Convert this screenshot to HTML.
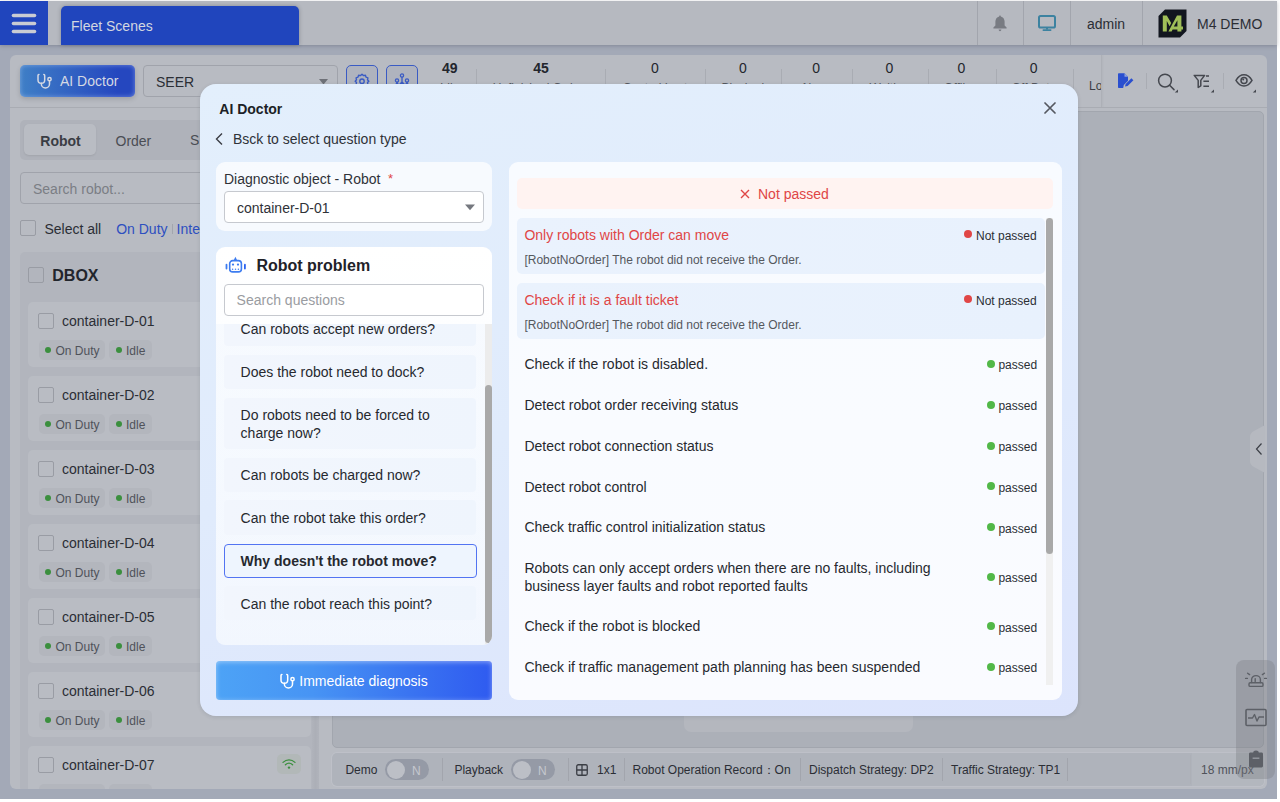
<!DOCTYPE html>
<html><head><meta charset="utf-8"><style>
*{box-sizing:border-box;margin:0;padding:0}
html,body{width:1280px;height:802px;overflow:hidden;background:#fff;font-family:"Liberation Sans",sans-serif;color:#2b2e35}
.abs{position:absolute}
.t{position:absolute;white-space:nowrap;line-height:1}
</style></head><body>
<div class="abs" style="left:0px;top:1px;width:1277px;height:798px;background:#a3a9b7"></div>
<div class="abs" style="left:0px;top:1px;width:1277px;height:44px;background:#b6b9c0;box-shadow:0 1px 4px rgba(40,45,60,.25)"></div>
<div class="abs" style="left:0px;top:1px;width:48px;height:44px;background:#2045bd"></div>
<svg class="abs" style="left:11px;top:12px" width="26" height="22" viewBox="0 0 26 22"><g stroke="#c9ccd3" stroke-width="3.6" stroke-linecap="round"><line x1="2.5" y1="3.5" x2="23.5" y2="3.5"/><line x1="2.5" y1="11.5" x2="23.5" y2="11.5"/><line x1="2.5" y1="19.5" x2="23.5" y2="19.5"/></g></svg>
<div class="abs" style="left:61px;top:6px;width:237.5px;height:39px;background:#2045bd;border-radius:5px 5px 0 0;box-shadow:0 0 4px rgba(30,35,50,.3)"></div>
<div class="t" style="left:71.0px;top:18.7px;font-size:14px;color:#d3d7e0;font-weight:400;">Fleet Scenes</div>
<div class="abs" style="left:977px;top:1px;width:1px;height:44px;background:#a2a5ad"></div>
<div class="abs" style="left:1023px;top:1px;width:1px;height:44px;background:#a2a5ad"></div>
<div class="abs" style="left:1070px;top:1px;width:1px;height:44px;background:#a2a5ad"></div>
<div class="abs" style="left:1142px;top:1px;width:1px;height:44px;background:#a2a5ad"></div>
<svg class="abs" style="left:993px;top:15px" width="14" height="17" viewBox="0 0 14 17"><path d="M7 0.5 C7.6 0.5 7.8 1 7.8 1.4 C10.2 2 11.6 4 11.6 6.6 V10.4 L13.6 12.6 V13.5 H0.4 V12.6 L2.4 10.4 V6.6 C2.4 4 3.8 2 6.2 1.4 C6.2 1 6.4 0.5 7 0.5Z M5.6 14.6 H8.4 C8.2 15.6 7.7 16.2 7 16.2 C6.3 16.2 5.8 15.6 5.6 14.6Z" fill="#787b82"/></svg>
<svg class="abs" style="left:1038px;top:15px" width="18" height="17" viewBox="0 0 18 17"><rect x="1" y="1" width="16" height="11.6" rx="1.6" fill="none" stroke="#3c82a0" stroke-width="2"/><rect x="8" y="12.6" width="2" height="2" fill="#3c82a0"/><rect x="4.5" y="14.2" width="9" height="1.8" rx="0.9" fill="#3c82a0"/></svg>
<div class="t" style="left:1087.0px;top:16.5px;font-size:14px;color:#2b2e35;font-weight:400;">admin</div>
<svg class="abs" style="left:1158px;top:9px" width="29" height="29" viewBox="0 0 29 29"><polygon points="7,0.5 28.5,0.5 28.5,22 22,28.5 0.5,28.5 0.5,7" fill="#12161f"/><g fill="#9fbe58"><path d="M4.8 6.4 H8.8 L13.2 14 L11.6 17.2 L8.8 12 V22.6 H4.8Z"/><path d="M10.4 22.6 L19 6.4 H23.4 V17.6 H25 V20.6 H23.4 V22.6 H19.4 V20.6 H14.6 L13.6 22.6Z M15.8 17.6 H19.4 V11.2Z"/></g></svg>
<div class="t" style="left:1197.0px;top:16.5px;font-size:14px;color:#2b2e35;font-weight:400;">M4 DEMO</div>
<div class="abs" style="left:10px;top:55px;width:1257px;height:734px;background:#b8bbc2;border-radius:6px"></div>
<div class="abs" style="left:20px;top:65px;width:115px;height:32px;border-radius:5px;background:linear-gradient(90deg,#3f7fc6,#2547bf 85%);box-shadow:inset 0 0 5px rgba(200,215,255,.45),0 2px 5px rgba(0,0,0,.15)"></div>
<svg class="abs" style="left:35.5px;top:73px" width="16" height="16" viewBox="0 0 16 16"><g fill="none" stroke="#d5d9e4" stroke-width="1.5" stroke-linecap="round"><path d="M2.9 1.6 Q2 1.7 2 2.6 V7 A3.35 3.35 0 0 0 8.7 7 V2.6 Q8.7 1.7 7.8 1.6"/><path d="M5.35 10.3 V10.9 A4.07 4.07 0 0 0 13.5 10.9 V7.9"/><circle cx="13.5" cy="6.2" r="1.65"/></g></svg>
<div class="t" style="left:60.0px;top:73.8px;font-size:14px;color:#d5d9e4;font-weight:400;">AI Doctor</div>
<div class="abs" style="left:143px;top:65px;width:195px;height:32px;border:1px solid #a0a3ab;border-radius:4px"></div>
<div class="t" style="left:156.0px;top:75.2px;font-size:14px;color:#2b2e35;font-weight:400;">SEER</div>
<svg class="abs" style="left:319px;top:79px" width="9" height="6" viewBox="0 0 9 6"><path d="M0 0 H9 L4.5 5.5Z" fill="#6e7178"/></svg>
<div class="abs" style="left:346px;top:65px;width:32px;height:32px;border:1.5px solid #3a5bc4;border-radius:5px;background:#afb3be"></div>
<svg class="abs" style="left:354px;top:73px" width="16" height="16" viewBox="0 0 16 16"><path d="M8 1.2 L9.4 2.6 L11.4 2.2 L12 4.1 L13.9 4.8 L13.5 6.8 L14.8 8.2 L13.5 9.6 L13.9 11.6 L12 12.3 L11.4 14.2 L9.4 13.8 L8 15.2 L6.6 13.8 L4.6 14.2 L4 12.3 L2.1 11.6 L2.5 9.6 L1.2 8.2 L2.5 6.8 L2.1 4.8 L4 4.1 L4.6 2.2 L6.6 2.6Z" fill="none" stroke="#3a5bc4" stroke-width="1.4" stroke-linejoin="round"/><circle cx="8" cy="8.2" r="2.2" fill="none" stroke="#3a5bc4" stroke-width="1.4"/></svg>
<div class="abs" style="left:386px;top:65px;width:32px;height:32px;border:1.5px solid #3a5bc4;border-radius:5px;background:#afb3be"></div>
<svg class="abs" style="left:393px;top:73px" width="18" height="16" viewBox="0 0 18 16"><g fill="none" stroke="#3a5bc4" stroke-width="1.3"><circle cx="9" cy="2.5" r="1.6"/><circle cx="4" cy="7.5" r="1.6"/><circle cx="14" cy="7.5" r="1.6"/><path d="M9 4 V14 M4 9 L2 14 M4 9 L6.5 14 M14 9 L11.5 14 M14 9 L16 14 M9 9 L6 12 M9 9 L12 12"/></g></svg>
<div class="t" style="left:409.7px;top:60.9px;width:80px;text-align:center;font-size:14px;color:#23262d;font-weight:700;">49</div>
<div class="t" style="left:389.7px;top:81.8px;width:120px;text-align:center;font-size:12px;color:#55585f;font-weight:400;">Idle</div>
<div class="t" style="left:501.0px;top:60.9px;width:80px;text-align:center;font-size:14px;color:#23262d;font-weight:700;">45</div>
<div class="t" style="left:481.0px;top:81.8px;width:120px;text-align:center;font-size:12px;color:#55585f;font-weight:400;">Unfinished Orders</div>
<div class="t" style="left:615.0px;top:60.9px;width:80px;text-align:center;font-size:14px;color:#23262d;font-weight:400;">0</div>
<div class="t" style="left:595.0px;top:81.8px;width:120px;text-align:center;font-size:12px;color:#55585f;font-weight:400;">Control Lost</div>
<div class="t" style="left:702.8px;top:60.9px;width:80px;text-align:center;font-size:14px;color:#23262d;font-weight:400;">0</div>
<div class="t" style="left:682.8px;top:81.8px;width:120px;text-align:center;font-size:12px;color:#55585f;font-weight:400;">Blocked</div>
<div class="t" style="left:776.2px;top:60.9px;width:80px;text-align:center;font-size:14px;color:#23262d;font-weight:400;">0</div>
<div class="t" style="left:756.2px;top:81.8px;width:120px;text-align:center;font-size:12px;color:#55585f;font-weight:400;">Alarm</div>
<div class="t" style="left:849.4px;top:60.9px;width:80px;text-align:center;font-size:14px;color:#23262d;font-weight:400;">0</div>
<div class="t" style="left:829.4px;top:81.8px;width:120px;text-align:center;font-size:12px;color:#55585f;font-weight:400;">Waiting</div>
<div class="t" style="left:921.3px;top:60.9px;width:80px;text-align:center;font-size:14px;color:#23262d;font-weight:400;">0</div>
<div class="t" style="left:901.3px;top:81.8px;width:120px;text-align:center;font-size:12px;color:#55585f;font-weight:400;">Offline</div>
<div class="t" style="left:993.7px;top:60.9px;width:80px;text-align:center;font-size:14px;color:#23262d;font-weight:400;">0</div>
<div class="t" style="left:973.7px;top:81.8px;width:120px;text-align:center;font-size:12px;color:#55585f;font-weight:400;">Off Duty</div>
<div class="abs" style="left:476px;top:69px;width:1px;height:26px;background:#a9acb3"></div>
<div class="abs" style="left:605px;top:69px;width:1px;height:26px;background:#a9acb3"></div>
<div class="abs" style="left:705px;top:69px;width:1px;height:26px;background:#a9acb3"></div>
<div class="abs" style="left:781px;top:69px;width:1px;height:26px;background:#a9acb3"></div>
<div class="abs" style="left:852px;top:69px;width:1px;height:26px;background:#a9acb3"></div>
<div class="abs" style="left:928px;top:69px;width:1px;height:26px;background:#a9acb3"></div>
<div class="abs" style="left:996px;top:69px;width:1px;height:26px;background:#a9acb3"></div>
<div class="abs" style="left:1073px;top:69px;width:1px;height:26px;background:#a9acb3"></div>
<div class="abs" style="left:1086px;top:55px;width:16px;height:52px;overflow:hidden"><div class="t" style="left:3px;top:80.4px;font-size:12px;color:#3b3e45;margin-top:-55px">Loc</div></div>
<div class="abs" style="left:1101px;top:55px;width:1px;height:52px;background:#adb0b7;box-shadow:1px 0 2px rgba(0,0,0,.05)"></div>
<svg class="abs" style="left:1117px;top:73px" width="18" height="16" viewBox="0 0 18 16"><path d="M1 1.2 C1 0.6 1.4 0.2 2 0.2 H7.5 L11 3.7 V7.8 L6.8 12 L6.2 15 H2 C1.4 15 1 14.6 1 14Z" fill="#2a4fcf"/><path d="M7.5 0.2 V3.7 H11" fill="#8fa3dd"/><path d="M8 13.6 L8.6 11 L14.4 5.2 L16.4 7.2 L10.6 13 Z" fill="#2a4fcf"/></svg>
<div class="abs" style="left:1146px;top:73px;width:1px;height:16px;background:#a9acb3"></div>
<svg class="abs" style="left:1157px;top:73px" width="22" height="20" viewBox="0 0 22 20"><circle cx="8" cy="7.6" r="6.4" fill="none" stroke="#45484f" stroke-width="1.5"/><path d="M12.6 12.2 L17 16.6" stroke="#45484f" stroke-width="1.5" stroke-linecap="round"/><path d="M21 16.4 V19.6 H17.8Z" fill="#45484f"/></svg>
<svg class="abs" style="left:1193px;top:73px" width="22" height="20" viewBox="0 0 22 20"><path d="M1.2 2.4 H11.6 L7.8 7.4 V12.8 L5.2 14.4 V7.4Z" fill="none" stroke="#45484f" stroke-width="1.5" stroke-linejoin="round"/><path d="M13 3 H16 M10.4 8.2 H16 M10.4 13.2 H16" stroke="#45484f" stroke-width="1.6"/><path d="M21 16.4 V19.6 H17.8Z" fill="#45484f"/></svg>
<div class="abs" style="left:1223px;top:73px;width:1px;height:16px;background:#a9acb3"></div>
<svg class="abs" style="left:1235px;top:73px" width="22" height="20" viewBox="0 0 22 20"><path d="M1 7.4 C3.2 3.6 6 1.8 9 1.8 C12 1.8 14.8 3.6 17 7.4 C14.8 11.2 12 13 9 13 C6 13 3.2 11.2 1 7.4Z" fill="none" stroke="#45484f" stroke-width="1.5"/><circle cx="9" cy="7.4" r="3" fill="none" stroke="#45484f" stroke-width="1.5"/><circle cx="8.2" cy="6.6" r="1" fill="#45484f"/><path d="M21 16.4 V19.6 H17.8Z" fill="#45484f"/></svg>
<div class="abs" style="left:10px;top:107px;width:1257px;height:1px;background:#a9acb3"></div>
<div class="abs" style="left:20px;top:120px;width:290px;height:40px;background:#afb2ba;border-radius:5px"></div>
<div class="abs" style="left:24px;top:124px;width:72px;height:31px;background:#b9bcc3;border-radius:5px;box-shadow:0 1px 2px rgba(0,0,0,.08)"></div>
<div class="t" style="left:40.3px;top:133.7px;font-size:14px;color:#3a3d44;font-weight:700;">Robot</div>
<div class="t" style="left:115.5px;top:133.7px;font-size:14px;color:#4a4d54;font-weight:400;">Order</div>
<div class="abs" style="left:190px;top:125px;width:9px;height:30px;overflow:hidden"><div class="t" style="left:0;top:8.2px;font-size:14px;color:#4a4d54">Statistics</div></div>
<div class="abs" style="left:20px;top:172px;width:290px;height:32px;border:1px solid #a0a3ab;border-radius:4px"></div>
<div class="t" style="left:33.0px;top:181.5px;font-size:14px;color:#7b7e85;font-weight:400;">Search robot...</div>
<div class="abs" style="left:20px;top:220px;width:16px;height:16px;border:1px solid #999ca4;border-radius:2px"></div>
<div class="t" style="left:44.4px;top:221.8px;font-size:14px;color:#2b2e35;font-weight:400;">Select all</div>
<div class="t" style="left:116.2px;top:221.8px;font-size:14px;color:#2d4fc0;font-weight:400;">On Duty</div>
<div class="abs" style="left:172px;top:224px;width:1px;height:10px;background:#a2a5ad"></div>
<div class="t" style="left:176.6px;top:221.8px;font-size:14px;color:#2d4fc0;font-weight:400;">Interrupted</div>
<div class="abs" style="left:0;top:0;width:330px;height:789px;overflow:hidden">
<div class="abs" style="left:20px;top:252px;width:292px;height:540px;background:#b2b5bd;border-radius:5px"></div>
<div class="abs" style="left:312px;top:252px;width:7px;height:537px;background:linear-gradient(90deg,#b0b3bb,#acafb7 50%,#b0b3bb)"></div>
<div class="abs" style="left:28px;top:267px;width:16px;height:16px;border:1px solid #999ca4;border-radius:2px"></div>
<div class="t" style="left:52.3px;top:268.2px;font-size:16px;color:#22252c;font-weight:700;">DBOX</div>
<div class="abs" style="left:28px;top:302px;width:283px;height:65px;background:#b9bcc3;border-radius:5px"></div>
<div class="abs" style="left:38px;top:313px;width:16px;height:16px;border:1px solid #999ca4;border-radius:2px"></div>
<div class="t" style="left:62.0px;top:314.2px;font-size:14px;color:#2b2e35;font-weight:400;">container-D-01</div>
<div class="abs" style="left:38.6px;top:340px;width:66px;height:19.5px;background:#b3b6bd;border-radius:5px"></div>
<div class="abs" style="left:44.5px;top:347px;width:6px;height:6px;background:#3b8f3e;border-radius:50%"></div>
<div class="t" style="left:55.5px;top:344.6px;font-size:12px;color:#4f525a;font-weight:400;">On Duty</div>
<div class="abs" style="left:109.2px;top:340px;width:42.5px;height:19.5px;background:#b3b6bd;border-radius:5px"></div>
<div class="abs" style="left:115.5px;top:347px;width:6px;height:6px;background:#3b8f3e;border-radius:50%"></div>
<div class="t" style="left:126.0px;top:344.6px;font-size:12px;color:#4f525a;font-weight:400;">Idle</div>
<div class="abs" style="left:277px;top:310px;width:24px;height:20px;background:#b2b8b8;border-radius:5px"></div>
<svg class="abs" style="left:282px;top:314px" width="14" height="12" viewBox="0 0 14 12"><g fill="none" stroke="#3b8f3e" stroke-width="1.3" stroke-linecap="round"><path d="M1 4.4 C4.6 1 9.4 1 13 4.4"/><path d="M3.4 6.8 C5.6 4.8 8.4 4.8 10.6 6.8"/></g><circle cx="7" cy="9.6" r="1.2" fill="#3b8f3e"/></svg>
<div class="abs" style="left:28px;top:376px;width:283px;height:65px;background:#b9bcc3;border-radius:5px"></div>
<div class="abs" style="left:38px;top:387px;width:16px;height:16px;border:1px solid #999ca4;border-radius:2px"></div>
<div class="t" style="left:62.0px;top:388.2px;font-size:14px;color:#2b2e35;font-weight:400;">container-D-02</div>
<div class="abs" style="left:38.6px;top:414px;width:66px;height:19.5px;background:#b3b6bd;border-radius:5px"></div>
<div class="abs" style="left:44.5px;top:421px;width:6px;height:6px;background:#3b8f3e;border-radius:50%"></div>
<div class="t" style="left:55.5px;top:418.6px;font-size:12px;color:#4f525a;font-weight:400;">On Duty</div>
<div class="abs" style="left:109.2px;top:414px;width:42.5px;height:19.5px;background:#b3b6bd;border-radius:5px"></div>
<div class="abs" style="left:115.5px;top:421px;width:6px;height:6px;background:#3b8f3e;border-radius:50%"></div>
<div class="t" style="left:126.0px;top:418.6px;font-size:12px;color:#4f525a;font-weight:400;">Idle</div>
<div class="abs" style="left:277px;top:384px;width:24px;height:20px;background:#b2b8b8;border-radius:5px"></div>
<svg class="abs" style="left:282px;top:388px" width="14" height="12" viewBox="0 0 14 12"><g fill="none" stroke="#3b8f3e" stroke-width="1.3" stroke-linecap="round"><path d="M1 4.4 C4.6 1 9.4 1 13 4.4"/><path d="M3.4 6.8 C5.6 4.8 8.4 4.8 10.6 6.8"/></g><circle cx="7" cy="9.6" r="1.2" fill="#3b8f3e"/></svg>
<div class="abs" style="left:28px;top:450px;width:283px;height:65px;background:#b9bcc3;border-radius:5px"></div>
<div class="abs" style="left:38px;top:461px;width:16px;height:16px;border:1px solid #999ca4;border-radius:2px"></div>
<div class="t" style="left:62.0px;top:462.2px;font-size:14px;color:#2b2e35;font-weight:400;">container-D-03</div>
<div class="abs" style="left:38.6px;top:488px;width:66px;height:19.5px;background:#b3b6bd;border-radius:5px"></div>
<div class="abs" style="left:44.5px;top:495px;width:6px;height:6px;background:#3b8f3e;border-radius:50%"></div>
<div class="t" style="left:55.5px;top:492.6px;font-size:12px;color:#4f525a;font-weight:400;">On Duty</div>
<div class="abs" style="left:109.2px;top:488px;width:42.5px;height:19.5px;background:#b3b6bd;border-radius:5px"></div>
<div class="abs" style="left:115.5px;top:495px;width:6px;height:6px;background:#3b8f3e;border-radius:50%"></div>
<div class="t" style="left:126.0px;top:492.6px;font-size:12px;color:#4f525a;font-weight:400;">Idle</div>
<div class="abs" style="left:277px;top:458px;width:24px;height:20px;background:#b2b8b8;border-radius:5px"></div>
<svg class="abs" style="left:282px;top:462px" width="14" height="12" viewBox="0 0 14 12"><g fill="none" stroke="#3b8f3e" stroke-width="1.3" stroke-linecap="round"><path d="M1 4.4 C4.6 1 9.4 1 13 4.4"/><path d="M3.4 6.8 C5.6 4.8 8.4 4.8 10.6 6.8"/></g><circle cx="7" cy="9.6" r="1.2" fill="#3b8f3e"/></svg>
<div class="abs" style="left:28px;top:524px;width:283px;height:65px;background:#b9bcc3;border-radius:5px"></div>
<div class="abs" style="left:38px;top:535px;width:16px;height:16px;border:1px solid #999ca4;border-radius:2px"></div>
<div class="t" style="left:62.0px;top:536.2px;font-size:14px;color:#2b2e35;font-weight:400;">container-D-04</div>
<div class="abs" style="left:38.6px;top:562px;width:66px;height:19.5px;background:#b3b6bd;border-radius:5px"></div>
<div class="abs" style="left:44.5px;top:569px;width:6px;height:6px;background:#3b8f3e;border-radius:50%"></div>
<div class="t" style="left:55.5px;top:566.6px;font-size:12px;color:#4f525a;font-weight:400;">On Duty</div>
<div class="abs" style="left:109.2px;top:562px;width:42.5px;height:19.5px;background:#b3b6bd;border-radius:5px"></div>
<div class="abs" style="left:115.5px;top:569px;width:6px;height:6px;background:#3b8f3e;border-radius:50%"></div>
<div class="t" style="left:126.0px;top:566.6px;font-size:12px;color:#4f525a;font-weight:400;">Idle</div>
<div class="abs" style="left:277px;top:532px;width:24px;height:20px;background:#b2b8b8;border-radius:5px"></div>
<svg class="abs" style="left:282px;top:536px" width="14" height="12" viewBox="0 0 14 12"><g fill="none" stroke="#3b8f3e" stroke-width="1.3" stroke-linecap="round"><path d="M1 4.4 C4.6 1 9.4 1 13 4.4"/><path d="M3.4 6.8 C5.6 4.8 8.4 4.8 10.6 6.8"/></g><circle cx="7" cy="9.6" r="1.2" fill="#3b8f3e"/></svg>
<div class="abs" style="left:28px;top:598px;width:283px;height:65px;background:#b9bcc3;border-radius:5px"></div>
<div class="abs" style="left:38px;top:609px;width:16px;height:16px;border:1px solid #999ca4;border-radius:2px"></div>
<div class="t" style="left:62.0px;top:610.2px;font-size:14px;color:#2b2e35;font-weight:400;">container-D-05</div>
<div class="abs" style="left:38.6px;top:636px;width:66px;height:19.5px;background:#b3b6bd;border-radius:5px"></div>
<div class="abs" style="left:44.5px;top:643px;width:6px;height:6px;background:#3b8f3e;border-radius:50%"></div>
<div class="t" style="left:55.5px;top:640.6px;font-size:12px;color:#4f525a;font-weight:400;">On Duty</div>
<div class="abs" style="left:109.2px;top:636px;width:42.5px;height:19.5px;background:#b3b6bd;border-radius:5px"></div>
<div class="abs" style="left:115.5px;top:643px;width:6px;height:6px;background:#3b8f3e;border-radius:50%"></div>
<div class="t" style="left:126.0px;top:640.6px;font-size:12px;color:#4f525a;font-weight:400;">Idle</div>
<div class="abs" style="left:277px;top:606px;width:24px;height:20px;background:#b2b8b8;border-radius:5px"></div>
<svg class="abs" style="left:282px;top:610px" width="14" height="12" viewBox="0 0 14 12"><g fill="none" stroke="#3b8f3e" stroke-width="1.3" stroke-linecap="round"><path d="M1 4.4 C4.6 1 9.4 1 13 4.4"/><path d="M3.4 6.8 C5.6 4.8 8.4 4.8 10.6 6.8"/></g><circle cx="7" cy="9.6" r="1.2" fill="#3b8f3e"/></svg>
<div class="abs" style="left:28px;top:672px;width:283px;height:65px;background:#b9bcc3;border-radius:5px"></div>
<div class="abs" style="left:38px;top:683px;width:16px;height:16px;border:1px solid #999ca4;border-radius:2px"></div>
<div class="t" style="left:62.0px;top:684.2px;font-size:14px;color:#2b2e35;font-weight:400;">container-D-06</div>
<div class="abs" style="left:38.6px;top:710px;width:66px;height:19.5px;background:#b3b6bd;border-radius:5px"></div>
<div class="abs" style="left:44.5px;top:717px;width:6px;height:6px;background:#3b8f3e;border-radius:50%"></div>
<div class="t" style="left:55.5px;top:714.6px;font-size:12px;color:#4f525a;font-weight:400;">On Duty</div>
<div class="abs" style="left:109.2px;top:710px;width:42.5px;height:19.5px;background:#b3b6bd;border-radius:5px"></div>
<div class="abs" style="left:115.5px;top:717px;width:6px;height:6px;background:#3b8f3e;border-radius:50%"></div>
<div class="t" style="left:126.0px;top:714.6px;font-size:12px;color:#4f525a;font-weight:400;">Idle</div>
<div class="abs" style="left:277px;top:680px;width:24px;height:20px;background:#b2b8b8;border-radius:5px"></div>
<svg class="abs" style="left:282px;top:684px" width="14" height="12" viewBox="0 0 14 12"><g fill="none" stroke="#3b8f3e" stroke-width="1.3" stroke-linecap="round"><path d="M1 4.4 C4.6 1 9.4 1 13 4.4"/><path d="M3.4 6.8 C5.6 4.8 8.4 4.8 10.6 6.8"/></g><circle cx="7" cy="9.6" r="1.2" fill="#3b8f3e"/></svg>
<div class="abs" style="left:28px;top:746px;width:283px;height:65px;background:#b9bcc3;border-radius:5px"></div>
<div class="abs" style="left:38px;top:757px;width:16px;height:16px;border:1px solid #999ca4;border-radius:2px"></div>
<div class="t" style="left:62.0px;top:758.2px;font-size:14px;color:#2b2e35;font-weight:400;">container-D-07</div>
<div class="abs" style="left:38.6px;top:784px;width:66px;height:19.5px;background:#b3b6bd;border-radius:5px"></div>
<div class="abs" style="left:44.5px;top:791px;width:6px;height:6px;background:#3b8f3e;border-radius:50%"></div>
<div class="t" style="left:55.5px;top:788.6px;font-size:12px;color:#4f525a;font-weight:400;">On Duty</div>
<div class="abs" style="left:109.2px;top:784px;width:42.5px;height:19.5px;background:#b3b6bd;border-radius:5px"></div>
<div class="abs" style="left:115.5px;top:791px;width:6px;height:6px;background:#3b8f3e;border-radius:50%"></div>
<div class="t" style="left:126.0px;top:788.6px;font-size:12px;color:#4f525a;font-weight:400;">Idle</div>
<div class="abs" style="left:277px;top:754px;width:24px;height:20px;background:#b2b8b8;border-radius:5px"></div>
<svg class="abs" style="left:282px;top:758px" width="14" height="12" viewBox="0 0 14 12"><g fill="none" stroke="#3b8f3e" stroke-width="1.3" stroke-linecap="round"><path d="M1 4.4 C4.6 1 9.4 1 13 4.4"/><path d="M3.4 6.8 C5.6 4.8 8.4 4.8 10.6 6.8"/></g><circle cx="7" cy="9.6" r="1.2" fill="#3b8f3e"/></svg>
</div>
<div class="abs" style="left:332px;top:111px;width:932px;height:637px;background:#acb0b8;border:1px solid #a2a6ae;border-radius:5px"></div>
<div class="abs" style="left:684px;top:690px;width:229px;height:42px;background:#b4b7be;border-radius:7px"></div>
<svg class="abs" style="left:1250px;top:425px" width="15" height="48" viewBox="0 0 15 48"><path d="M15 0 L4 6 C1.5 7.4 0 9 0 12 V36 C0 39 1.5 40.6 4 42 L15 48Z" fill="#b6b9c0"/><path d="M11.5 18.5 L6.5 24 L11.5 29.5" fill="none" stroke="#3b3e45" stroke-width="1.2"/></svg>
<div class="abs" style="left:332px;top:753px;width:932px;height:33px;background:#afb3bb;border-radius:5px;box-shadow:0 0 0 1px rgba(200,204,212,.35)"></div>
<div class="abs" style="left:1192px;top:753px;width:72px;height:33px;background:#b3b7be;border-radius:0 5px 5px 0"></div>
<div class="t" style="left:345.4px;top:764.0px;font-size:12px;color:#2b2e35;font-weight:400;">Demo</div>
<div class="abs" style="left:385px;top:759px;width:44px;height:21px;background:#959aa6;border-radius:11px"></div>
<div class="abs" style="left:386.5px;top:760.5px;width:18px;height:18px;background:#bcbfc6;border-radius:50%"></div>
<div class="t" style="left:412.0px;top:764.5px;font-size:12px;color:#c5c8cf;font-weight:400;">N</div>
<div class="abs" style="left:442px;top:758px;width:1px;height:23px;background:#a2a5ad"></div>
<div class="t" style="left:454.4px;top:764.0px;font-size:12px;color:#2b2e35;font-weight:400;">Playback</div>
<div class="abs" style="left:511px;top:759px;width:44px;height:21px;background:#959aa6;border-radius:11px"></div>
<div class="abs" style="left:512.5px;top:760.5px;width:18px;height:18px;background:#bcbfc6;border-radius:50%"></div>
<div class="t" style="left:538.0px;top:764.5px;font-size:12px;color:#c5c8cf;font-weight:400;">N</div>
<div class="abs" style="left:568px;top:758px;width:1px;height:23px;background:#a2a5ad"></div>
<svg class="abs" style="left:576px;top:764px" width="12" height="12" viewBox="0 0 12 12"><rect x="0.75" y="0.75" width="10.5" height="10.5" rx="1.5" fill="none" stroke="#3b3e45" stroke-width="1.3"/><path d="M6 0.75 V11.25 M0.75 6 H11.25" stroke="#3b3e45" stroke-width="1.3"/></svg>
<div class="t" style="left:597.0px;top:764.0px;font-size:12px;color:#2b2e35;font-weight:400;">1x1</div>
<div class="abs" style="left:624px;top:758px;width:1px;height:23px;background:#a2a5ad"></div>
<div class="t" style="left:632.5px;top:764.0px;font-size:12px;color:#2b2e35;font-weight:400;">Robot Operation Record：On</div>
<div class="abs" style="left:800px;top:758px;width:1px;height:23px;background:#a2a5ad"></div>
<div class="t" style="left:809.0px;top:764.0px;font-size:12px;color:#2b2e35;font-weight:400;">Dispatch Strategy: DP2</div>
<div class="abs" style="left:942px;top:758px;width:1px;height:23px;background:#a2a5ad"></div>
<div class="t" style="left:951.0px;top:764.0px;font-size:12px;color:#2b2e35;font-weight:400;">Traffic Strategy: TP1</div>
<div class="abs" style="left:1067px;top:758px;width:1px;height:23px;background:#a2a5ad"></div>
<div class="abs" style="left:1190px;top:755px;width:1px;height:29px;background:#adb0b7"></div>
<div class="t" style="left:1201.0px;top:764.0px;font-size:12px;color:#4f525a;font-weight:400;">18 mm/px</div>
<div class="abs" style="left:1236px;top:660px;width:39px;height:119px;background:rgba(120,123,130,.35);border-radius:8px"></div>
<svg class="abs" style="left:1244px;top:669px" width="24" height="20" viewBox="0 0 24 20"><g fill="none" stroke="#5d6067" stroke-width="1.4" stroke-linecap="round"><path d="M7.6 13.5 V10.6 C7.6 8.2 9.6 6.6 12 6.6 C14.4 6.6 16.4 8.2 16.4 10.6 V13.5"/><rect x="5" y="13.8" width="14" height="3.6" rx="1.2"/><path d="M3.6 4.2 L5.6 5.6 M20.4 4.2 L18.4 5.6 M1.6 9.4 H3.4 M20.6 9.4 H22.4 M11.2 9.6 V12.6"/></g></svg>
<svg class="abs" style="left:1245px;top:708px" width="22" height="20" viewBox="0 0 22 20"><rect x="1" y="1.5" width="20" height="16" rx="1" fill="none" stroke="#5d6067" stroke-width="1.6"/><path d="M3 10 H7.5 L9.5 6.5 L12 13 L14 9 L19 9" fill="none" stroke="#5d6067" stroke-width="1.4" stroke-linejoin="round"/></svg>
<svg class="abs" style="left:1248px;top:750px" width="16" height="18" viewBox="0 0 16 18"><path d="M2.4 2.6 H5.2 C5.2 1.4 6.4 0.6 8 0.6 C9.6 0.6 10.8 1.4 10.8 2.6 H13.6 C14.4 2.6 15 3.2 15 4 V16 C15 16.8 14.4 17.4 13.6 17.4 H2.4 C1.6 17.4 1 16.8 1 16 V4 C1 3.2 1.6 2.6 2.4 2.6Z" fill="#5d6067"/><path d="M4.6 8.2 H11.4" stroke="#9a9da4" stroke-width="1.3"/></svg>
<div class="abs" style="left:200px;top:84px;width:878px;height:632px;border-radius:16px;background:linear-gradient(165deg,#e3effc 0%,#e0ebfc 50%,#dce4fc 100%);box-shadow:0 1px 4px rgba(20,30,60,.12)"></div>
<div class="t" style="left:219.3px;top:101.5px;font-size:14px;color:#1c1f26;font-weight:700;">AI Doctor</div>
<svg class="abs" style="left:1044px;top:102px" width="12" height="12" viewBox="0 0 12 12"><path d="M1 1 L11 11 M11 1 L1 11" stroke="#555860" stroke-width="1.7" stroke-linecap="round"/></svg>
<svg class="abs" style="left:214px;top:132px" width="10" height="14" viewBox="0 0 10 14"><path d="M8 1.5 L2.5 7 L8 12.5" fill="none" stroke="#3a3d44" stroke-width="1.4"/></svg>
<div class="t" style="left:233.0px;top:132.0px;font-size:14px;color:#2f3238;font-weight:400;">Bsck to select question type</div>
<div class="abs" style="left:216px;top:162px;width:276px;height:69px;background:rgba(255,255,255,.72);border-radius:9px"></div>
<div class="t" style="left:224.0px;top:171.7px;font-size:14px;color:#2f3238;font-weight:400;">Diagnostic object - Robot</div>
<div class="t" style="left:388.0px;top:171.5px;font-size:13px;color:#e04646;font-weight:400;">*</div>
<div class="abs" style="left:224px;top:191px;width:260px;height:32px;background:#fff;border:1px solid #c6c9cf;border-radius:4px"></div>
<div class="t" style="left:237.0px;top:201.0px;font-size:14px;color:#2f3238;font-weight:400;">container-D-01</div>
<svg class="abs" style="left:465px;top:204px" width="10" height="7" viewBox="0 0 10 7"><path d="M0 0.5 H10 L5 6.3Z" fill="#75787f"/></svg>
<div class="abs" style="left:216px;top:247px;width:276px;height:398px;background:linear-gradient(180deg,#ffffff 0%,#fbfdff 40%,#f3f7fe 100%);border-radius:9px"></div>
<svg class="abs" style="left:224px;top:255px" width="24" height="20" viewBox="0 0 24 20"><g fill="#3d7cf0"><rect x="1.6" y="8.8" width="1.8" height="5.7" rx="0.9"/><rect x="20" y="8.8" width="1.8" height="5.7" rx="0.9" fill="#2a62f0"/><path d="M9.6 5.4 L11.4 1.8 L13.2 5.4Z"/></g><rect x="5.7" y="5.6" width="11.7" height="11.3" rx="3" fill="none" stroke="#3d7cf0" stroke-width="1.6"/><g fill="#3d7cf0"><circle cx="9" cy="9.6" r="1.15"/><circle cx="14" cy="9.6" r="1.15"/><circle cx="8.6" cy="14.3" r="0.75"/><circle cx="11.5" cy="14.3" r="0.75"/><circle cx="14.4" cy="14.3" r="0.75"/></g></svg>
<div class="t" style="left:256.4px;top:257.9px;font-size:16px;color:#1f2229;font-weight:700;">Robot problem</div>
<div class="abs" style="left:224px;top:284px;width:260px;height:32px;background:#fff;border:1px solid #c6c9cf;border-radius:4px"></div>
<div class="t" style="left:236.6px;top:293.2px;font-size:14px;color:#9a9ca1;font-weight:400;">Search questions</div>
<div class="abs" style="left:216px;top:324px;width:276px;height:321px;overflow:hidden;border-radius:0 0 9px 9px;background:linear-gradient(180deg,rgba(240,246,254,.5),rgba(240,246,254,.3))">
<div class="abs" style="left:8px;top:-13px;width:252px;height:34.6px;background:linear-gradient(90deg,#f2f6fd,#eff5fd);border-radius:4px"></div>
<div class="t" style="left:24.6px;top:-2.0px;font-size:14px;color:#26292f;font-weight:400;">Can robots accept new orders?</div>
<div class="abs" style="left:8px;top:30.5px;width:252px;height:34.5px;background:linear-gradient(90deg,#f2f6fd,#eff5fd);border-radius:4px"></div>
<div class="t" style="left:24.6px;top:41.0px;font-size:14px;color:#26292f;font-weight:400;">Does the robot need to dock?</div>
<div class="abs" style="left:8px;top:74px;width:252px;height:51.2px;background:linear-gradient(90deg,#f2f6fd,#eff5fd);border-radius:4px"></div>
<div class="t" style="left:24.6px;top:84.2px;font-size:14px;color:#26292f;font-weight:400;">Do robots need to be forced to</div>
<div class="t" style="left:24.6px;top:101.6px;font-size:14px;color:#26292f;font-weight:400;">charge now?</div>
<div class="abs" style="left:8px;top:133.5px;width:252px;height:34.4px;background:linear-gradient(90deg,#f2f6fd,#eff5fd);border-radius:4px"></div>
<div class="t" style="left:24.6px;top:144.0px;font-size:14px;color:#26292f;font-weight:400;">Can robots be charged now?</div>
<div class="abs" style="left:8px;top:176.4px;width:252px;height:34.4px;background:linear-gradient(90deg,#f2f6fd,#eff5fd);border-radius:4px"></div>
<div class="t" style="left:24.6px;top:186.9px;font-size:14px;color:#26292f;font-weight:400;">Can the robot take this order?</div>
<div class="abs" style="left:8px;top:219.5px;width:253px;height:34px;background:#eef5fe;border:1px solid #5274f2;border-radius:4px"></div>
<div class="t" style="left:24.6px;top:229.8px;font-size:14px;color:#26292f;font-weight:700;">Why doesn&#39;t the robot move?</div>
<div class="abs" style="left:8px;top:261.9px;width:252px;height:34.4px;background:linear-gradient(90deg,#f2f6fd,#eff5fd);border-radius:4px"></div>
<div class="t" style="left:24.6px;top:273.0px;font-size:14px;color:#26292f;font-weight:400;">Can the robot reach this point?</div>
<div class="abs" style="left:269px;top:0px;width:7px;height:320px;background:#ececec"></div>
<div class="abs" style="left:269px;top:60.60000000000002px;width:7px;height:258px;background:#a9a9a9;border-radius:4px"></div>
</div>
<div class="abs" style="left:216px;top:661px;width:276px;height:39px;border-radius:4px;background:linear-gradient(90deg,#4da3f6 0%,#4794f4 35%,#3a74f1 70%,#2f5bf0 100%);box-shadow:inset 0 1px 5px rgba(255,255,255,.45)"></div>
<svg class="abs" style="left:279px;top:673px" width="16" height="16" viewBox="0 0 16 16"><g fill="none" stroke="#ffffff" stroke-width="1.5" stroke-linecap="round"><path d="M2.9 1.6 Q2 1.7 2 2.6 V7 A3.35 3.35 0 0 0 8.7 7 V2.6 Q8.7 1.7 7.8 1.6"/><path d="M5.35 10.3 V10.9 A4.07 4.07 0 0 0 13.5 10.9 V7.9"/><circle cx="13.5" cy="6.2" r="1.65"/></g></svg>
<div class="t" style="left:299.3px;top:674.1px;font-size:14px;color:#ffffff;font-weight:400;">Immediate diagnosis</div>
<div class="abs" style="left:508.5px;top:162px;width:553px;height:537.5px;background:linear-gradient(180deg,#f8fbff,#fafbff);border-radius:9px"></div>
<div class="abs" style="left:516.7px;top:178px;width:536.7px;height:31.4px;background:#fff3f1;border-radius:5px"></div>
<svg class="abs" style="left:740px;top:189px" width="10" height="10" viewBox="0 0 10 10"><path d="M1 1 L9 9 M9 1 L1 9" stroke="#e04646" stroke-width="1.4"/></svg>
<div class="t" style="left:758.0px;top:187.2px;font-size:14px;color:#e04646;font-weight:400;">Not passed</div>
<div class="abs" style="left:516.7px;top:218px;width:536.7px;height:466.5px;overflow:hidden">
<div class="abs" style="left:0px;top:0px;width:528.4px;height:56.4px;background:linear-gradient(90deg,#eaf2fd,#e8f1fd);border-radius:5px"></div>
<div class="t" style="left:7.7px;top:10.0px;font-size:14px;color:#e04646;font-weight:400;">Only robots with Order can move</div>
<div class="t" style="left:7.7px;top:35.5px;font-size:12px;color:#55585e;font-weight:400;">[RobotNoOrder] The robot did not receive the Order.</div>
<div class="abs" style="left:447.0999999999999px;top:12.099999999999994px;width:8px;height:8px;background:#e04646;border-radius:50%"></div>
<div class="t" style="left:459.3px;top:12.1px;font-size:12px;color:#2b2e34;font-weight:400;">Not passed</div>
<div class="abs" style="left:0px;top:65px;width:528.4px;height:56.4px;background:linear-gradient(90deg,#eaf2fd,#e8f1fd);border-radius:5px"></div>
<div class="t" style="left:7.7px;top:75.0px;font-size:14px;color:#e04646;font-weight:400;">Check if it is a fault ticket</div>
<div class="t" style="left:7.7px;top:100.5px;font-size:12px;color:#55585e;font-weight:400;">[RobotNoOrder] The robot did not receive the Order.</div>
<div class="abs" style="left:447.0999999999999px;top:77.10000000000002px;width:8px;height:8px;background:#e04646;border-radius:50%"></div>
<div class="t" style="left:459.3px;top:77.1px;font-size:12px;color:#2b2e34;font-weight:400;">Not passed</div>
<div class="t" style="left:7.7px;top:139.1px;font-size:14px;color:#26292f;font-weight:400;">Check if the robot is disabled.</div>
<div class="abs" style="left:470.29999999999995px;top:141.9px;width:8px;height:8px;background:#52b848;border-radius:50%"></div>
<div class="t" style="left:481.7px;top:141.4px;font-size:12px;color:#2b2e34;font-weight:400;">passed</div>
<div class="t" style="left:7.7px;top:180.1px;font-size:14px;color:#26292f;font-weight:400;">Detect robot order receiving status</div>
<div class="abs" style="left:470.29999999999995px;top:182.9px;width:8px;height:8px;background:#52b848;border-radius:50%"></div>
<div class="t" style="left:481.7px;top:182.4px;font-size:12px;color:#2b2e34;font-weight:400;">passed</div>
<div class="t" style="left:7.7px;top:220.8px;font-size:14px;color:#26292f;font-weight:400;">Detect robot connection status</div>
<div class="abs" style="left:470.29999999999995px;top:223.6px;width:8px;height:8px;background:#52b848;border-radius:50%"></div>
<div class="t" style="left:481.7px;top:223.1px;font-size:12px;color:#2b2e34;font-weight:400;">passed</div>
<div class="t" style="left:7.7px;top:261.6px;font-size:14px;color:#26292f;font-weight:400;">Detect robot control</div>
<div class="abs" style="left:470.29999999999995px;top:264.4px;width:8px;height:8px;background:#52b848;border-radius:50%"></div>
<div class="t" style="left:481.7px;top:263.9px;font-size:12px;color:#2b2e34;font-weight:400;">passed</div>
<div class="t" style="left:7.7px;top:302.4px;font-size:14px;color:#26292f;font-weight:400;">Check traffic control initialization status</div>
<div class="abs" style="left:470.29999999999995px;top:305.2px;width:8px;height:8px;background:#52b848;border-radius:50%"></div>
<div class="t" style="left:481.7px;top:304.7px;font-size:12px;color:#2b2e34;font-weight:400;">passed</div>
<div class="t" style="left:7.7px;top:343.2px;font-size:14px;color:#26292f;font-weight:400;">Robots can only accept orders when there are no faults, including</div>
<div class="t" style="left:7.7px;top:360.8px;font-size:14px;color:#26292f;font-weight:400;">business layer faults and robot reported faults</div>
<div class="abs" style="left:470.29999999999995px;top:354.8px;width:8px;height:8px;background:#52b848;border-radius:50%"></div>
<div class="t" style="left:481.7px;top:354.3px;font-size:12px;color:#2b2e34;font-weight:400;">passed</div>
<div class="t" style="left:7.7px;top:401.2px;font-size:14px;color:#26292f;font-weight:400;">Check if the robot is blocked</div>
<div class="abs" style="left:470.29999999999995px;top:404.0px;width:8px;height:8px;background:#52b848;border-radius:50%"></div>
<div class="t" style="left:481.7px;top:403.5px;font-size:12px;color:#2b2e34;font-weight:400;">passed</div>
<div class="t" style="left:7.7px;top:441.9px;font-size:14px;color:#26292f;font-weight:400;">Check if traffic management path planning has been suspended</div>
<div class="abs" style="left:470.29999999999995px;top:444.7px;width:8px;height:8px;background:#52b848;border-radius:50%"></div>
<div class="t" style="left:481.7px;top:444.2px;font-size:12px;color:#2b2e34;font-weight:400;">passed</div>
<div class="t" style="left:7.7px;top:482.6px;font-size:14px;color:#26292f;font-weight:400;">Check if the robot is charging</div>
<div class="abs" style="left:470.29999999999995px;top:485.4px;width:8px;height:8px;background:#52b848;border-radius:50%"></div>
<div class="t" style="left:481.7px;top:484.9px;font-size:12px;color:#2b2e34;font-weight:400;">passed</div>
<div class="abs" style="left:529.7px;top:0px;width:7px;height:466.5px;background:#f0f0f0"></div>
<div class="abs" style="left:529.7px;top:0px;width:7px;height:336.4px;background:#a9a9a9;border-radius:4px"></div>
</div>

</body></html>
